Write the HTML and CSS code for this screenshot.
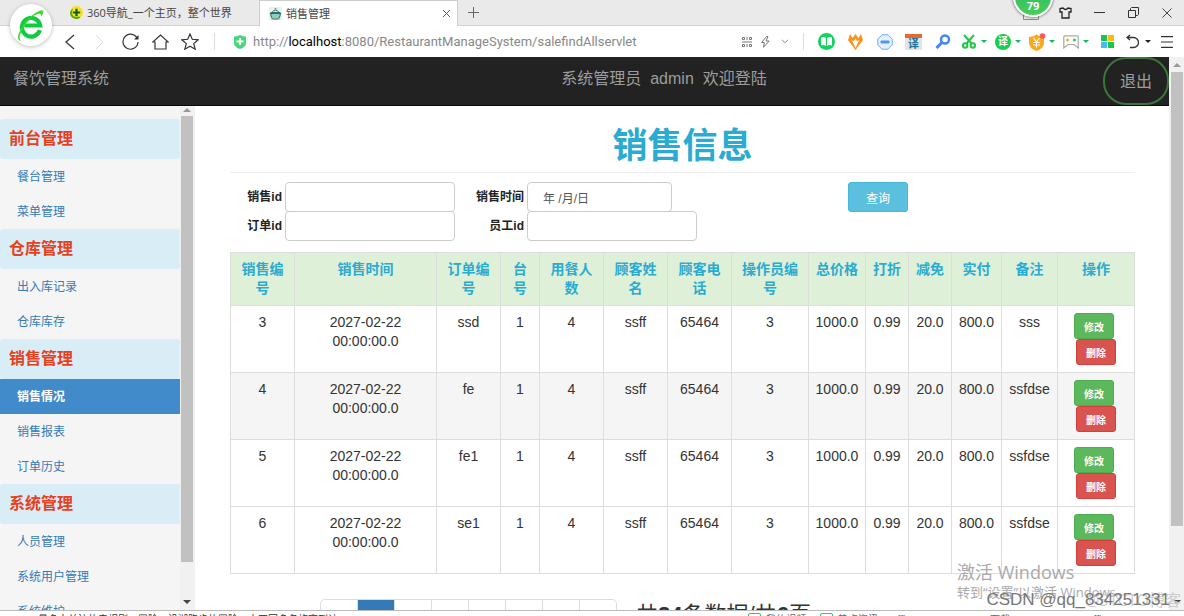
FILE: index.html
```html
<!DOCTYPE html>
<html lang="zh-CN">
<head>
<meta charset="utf-8">
<title>销售管理</title>
<link rel="stylesheet" href="styles.css">
</head>
<body>
<header class="browser">
  <div class="tabbar">
    <div class="tab">
      <svg class="favicon" viewBox="0 0 14 14"><circle cx="7" cy="7" r="7" fill="#f8df1e"/><path d="M0 7a7 7 0 0 0 11 5.700L3 3Q1 4 0 7z" fill="#4aa626"/><circle cx="7" cy="7" r="5" fill="#f5e52b"/><path d="M7 3v8M3 7h8" stroke="#135c25" stroke-width="2.400"/></svg>
      <span>360导航_一个主页，整个世界</span>
    </div>
    <div class="tab tab-active">
      <svg class="favicon" viewBox="0 0 14 14"><rect width="14" height="14" fill="#d9f8f5"/><path d="M2 6h10v3q0 3-3 4H5q-3-1-3-4z" fill="#7fd3ce" stroke="#28545a"/><path d="M3 6q4-5 8 0M6 2h2M1 7h12" fill="none" stroke="#4c5740"/><path d="M2 13h10" stroke="#d19c43"/></svg>
      <span>销售管理</span>
      <button class="plain tab-close" aria-label="关闭标签"><svg width="9" height="9" viewBox="0 0 9 9"><path d="M1 1l7 7M8 1l-7 7" stroke="#555"/></svg></button>
    </div>
    <button class="plain tab-new" aria-label="新标签"><svg width="11" height="11" viewBox="0 0 11 11"><path d="M5.500 0v11M0 5.500h11" stroke="#666"/></svg></button>
    <div class="window-controls">
      <button class="plain" aria-label="面板"><svg width="16" height="14" viewBox="0 0 16 14"><path d="M.5 1.500h15v12H.5zM5 10.500h6" fill="none" stroke="#888"/></svg></button>
      <button class="plain" aria-label="皮肤"><svg width="13" height="12" viewBox="0 0 13 12"><path d="M4 1L1 1.500v3.500h2v6h7V5h2V1.500L9 1Q6.500 4 4 1z" fill="none" stroke="#222" stroke-width="1.300"/></svg></button>
      <button class="plain" aria-label="最小化"><svg width="11" height="11" viewBox="0 0 11 11"><path d="M0 5.500h11" stroke="#333"/></svg></button>
      <button class="plain" aria-label="还原"><svg width="11" height="11" viewBox="0 0 11 11"><path d="M.5 3.500h7v7h-7zM2.500 3V1.500l1-1h7v7l-1 1H8" fill="none" stroke="#333"/></svg></button>
      <button class="plain" aria-label="关闭"><svg width="10" height="10" viewBox="0 0 10 10"><path d="M.5.5l9 9M9.500.5l-9 9" stroke="#444"/></svg></button>
    </div>
  </div>
  <div class="toolbar">
    <button class="plain nav" aria-label="后退"><svg width="10" height="16" viewBox="0 0 10 16"><path d="M9 1L1 8l8 7" fill="none" stroke="#333" stroke-width="1.200"/></svg></button>
    <button class="plain nav" aria-label="前进"><svg width="10" height="16" viewBox="0 0 10 16"><path d="M1 1l7 7-7 7" fill="none" stroke="#ddd"/></svg></button>
    <button class="plain nav" aria-label="刷新"><svg width="17" height="17" viewBox="0 0 17 17"><path d="M15.500 6A7.500 7.500 0 1 0 16 9" fill="none" stroke="#333" stroke-width="1.200"/><path d="M16.500 2v4.500H12z" fill="#333"/></svg></button>
    <button class="plain nav" aria-label="主页"><svg width="17" height="16" viewBox="0 0 17 16"><path d="M3 8H.8L8.500 1l7.700 7H14v7H3z" fill="none" stroke="#333" stroke-width="1.200"/></svg></button>
    <button class="plain nav" aria-label="收藏"><svg width="18" height="17" viewBox="0 0 18 17"><path d="M9 1l2.300 5.300 5.900.5-4.500 3.800 1.500 5.600L9 13.200l-5.200 3 1.500-5.600L.8 6.800l5.900-.5z" fill="none" stroke="#333" stroke-width="1.200"/></svg></button>
    <span class="divider"></span>
    <div class="address">
      <svg width="12" height="14" viewBox="0 0 12 14"><path d="M0 1.500Q3 1.500 6 0q3 1.500 6 1.500V8q0 4-6 6-6-2-6-6z" fill="#46d67c"/><path d="M6 3v7M2.500 6.500h7" stroke="#fff" stroke-width="1.800"/></svg>
      <span class="url">http://<b>localhost</b>:8080/RestaurantManageSystem/salefindAllservlet</span>
    </div>
    <button class="plain mini" aria-label="二维码"><svg width="10" height="10" viewBox="0 0 10 10" fill="none" stroke="#777"><path d="M.5.5h2v2h-2zM7.500.5h2v2h-2zM.5 7.500h2v2h-2zM7.500 7.500h2v2h-2zM5 0v3M5 7v3M0 5h10"/></svg></button>
    <button class="plain mini" aria-label="极速模式"><svg width="9" height="12" viewBox="0 0 9 12"><path d="M5.500.5L.7 6.500h2.600L2.500 11.300 8.200 5H5l2-4.500z" fill="none" stroke="#777"/></svg></button>
    <button class="plain mini" aria-label="更多"><svg width="8" height="5" viewBox="0 0 8 5"><path d="M1 .8l3 3 3-3" fill="none" stroke="#888"/></svg></button>
    <span class="divider"></span>
    <button class="plain ext" aria-label="阅读"><svg width="17" height="17" viewBox="0 0 17 17"><circle cx="8.500" cy="8.500" r="8.500" fill="#10d45e"/><path d="M3 4.500q3-1 5 .5v8q-2-1.500-5-.5zM14 4.500q-3-1-5 .5v8q2-1.500 5-.5z" fill="#fff"/></svg></button>
    <button class="plain ext" aria-label="助手"><svg width="15" height="16" viewBox="0 0 15 16"><path d="M2 0l2.500 4L7.500 0l3 4L13 0l2 6-7.500 10L0 6z" fill="#f7951e"/><path d="M4 6.500L7.500 14 11 6.500l-2 .5-1.500-2.500L6 7z" fill="#fff"/></svg></button>
    <button class="plain ext" aria-label="拦截"><svg width="16" height="16" viewBox="0 0 16 16"><path d="M5 .8h6L15.200 5v6L11 15.200H5L.8 11V5z" fill="#e6f1ff" stroke="#6aaaf8"/><rect x="3.500" y="6.500" width="9" height="3" rx="1" fill="#4a98f5"/></svg></button>
    <button class="plain ext" aria-label="网页翻译"><span class="trans-box">译</span></button>
    <button class="plain ext" aria-label="搜索"><svg width="16" height="15" viewBox="0 0 16 15"><circle cx="10" cy="5.500" r="4" fill="none" stroke="#4285f4" stroke-width="2.400"/><path d="M7 8.500L1.500 14" stroke="#4285f4" stroke-width="3"/></svg></button>
    <button class="plain menu-btn" aria-label="截图"><span class="slot"><svg width="14" height="15" viewBox="0 0 14 15"><path d="M2 1l8 9M12 1l-8 9" stroke="#1fc845" stroke-width="2"/><g fill="none" stroke="#1fc845" stroke-width="2"><circle cx="3.200" cy="11.500" r="2.200"/><circle cx="10.800" cy="11.500" r="2.200"/></g></svg></span><i class="caret"></i></button>
    <button class="plain menu-btn" aria-label="翻译"><span class="slot"><span class="trans-dot">译</span></span><i class="caret"></i></button>
    <button class="plain menu-btn" aria-label="网银"><span class="slot"><svg width="18" height="18" viewBox="0 0 18 18"><path d="M1 4q4 0 7.500-2.500Q12 4 16 4v6q0 5-7.500 8Q1 15 1 10z" fill="#fba81c"/><path d="M5.500 5l3 4 3-4M5 9.500h7M5 12h7M8.500 9v5.500" fill="none" stroke="#fff" stroke-width="1.200"/><circle cx="14.500" cy="3" r="2.800" fill="#f75c5c"/></svg></span><i class="caret"></i></button>
    <button class="plain menu-btn" aria-label="游戏"><span class="slot"><svg width="16" height="14" viewBox="0 0 16 14"><path d="M2 .8h12q1.200 0 1.200 1.200v11L11 9.500H5L.8 13V2Q.8.800 2 .8z" fill="none" stroke="#aaa" stroke-width="1.200"/><circle cx="4.500" cy="5" r="1.500" fill="#f7a823"/><circle cx="11.500" cy="5" r="1.500" fill="#2cc94c"/></svg></span><i class="caret"></i></button>
    <button class="plain apps" aria-label="应用"><svg width="13" height="13" viewBox="0 0 13 13"><path d="M0 0h6v6H0z" fill="#17c94a"/><path d="M7 0h6v6H7z" fill="#fdb913"/><path d="M0 7h6v6H0z" fill="#45bdf3"/><path d="M7 7h6v6H7z" fill="#17c94a"/></svg></button>
    <button class="plain menu-btn" aria-label="撤销"><span class="slot"><svg width="14" height="15" viewBox="0 0 14 15"><path d="M4 1L1 3.500 4 6M1 3.500h6.500a5 5 0 0 1 0 10H4" fill="none" stroke="#333" stroke-width="1.300"/></svg></span><i class="caret caret-dark"></i></button>
    <button class="plain main-menu" aria-label="菜单"><svg width="12" height="12" viewBox="0 0 12 12"><path d="M0 .7h12M0 6h12M0 11.300h12" stroke="#333" stroke-width="1.200"/></svg></button>
  </div>
  <div class="logo"><svg width="28" height="33" viewBox="0 0 30 35"><path d="M24.500 22.500A9.800 10 0 1 1 24.800 17.500H8" fill="none" stroke="#10cb43" stroke-width="4.500"/><path d="M4 34C-2 33 2 23 9 14 17 5 26-1 28 2q1 2-2 6 0-4-3-3-6 1-12 9C4 23 1 31 4 34z" fill="#3ddd28"/></svg></div>
  <div class="speed">79</div>
</header>

<div class="viewport">
  <div class="page">
    <nav class="navbar">
      <a class="brand" href="#">餐饮管理系统</a>
      <p class="welcome">系统管理员&nbsp; admin&nbsp; 欢迎登陆</p>
      <a class="logout" href="#">退出</a>
    </nav>
    <div class="columns">
      <aside class="side">
        <div class="side-menu">
          <h2>前台管理</h2>
          <a href="#">餐台管理</a>
          <a href="#">菜单管理</a>
          <h2>仓库管理</h2>
          <a href="#">出入库记录</a>
          <a href="#">仓库库存</a>
          <h2>销售管理</h2>
          <a class="active" href="#">销售情况</a>
          <a href="#">销售报表</a>
          <a href="#">订单历史</a>
          <h2>系统管理</h2>
          <a href="#">人员管理</a>
          <a href="#">系统用户管理</a>
          <a href="#">系统维护</a>
        </div>
        <div class="scroll side-scroll"><i class="up"></i><span class="thumb"></span><i class="down"></i></div>
      </aside>
      <main class="main">
        <h1>销售信息</h1>
        <form class="search">
          <label for="sale-id">销售id</label><input id="sale-id" type="text">
          <label for="sale-time">销售时间</label><input id="sale-time" class="date" type="text" value="年 /月/日">
          <button class="query" type="button">查询</button>
          <label for="order-id">订单id</label><input id="order-id" type="text">
          <label for="staff-id">员工id</label><input id="staff-id" type="text">
        </form>
        <table>
          <colgroup><col class="w64"><col class="w142"><col class="w64"><col class="w39"><col class="w64"><col class="w64"><col class="w64"><col class="w77"><col class="w57"><col class="w43"><col class="w43"><col class="w50"><col class="w56"><col class="w77"></colgroup>
          <thead>
            <tr><th>销售编号</th><th>销售时间</th><th>订单编号</th><th>台号</th><th>用餐人数</th><th>顾客姓名</th><th>顾客电话</th><th>操作员编号</th><th>总价格</th><th>打折</th><th>减免</th><th>实付</th><th>备注</th><th>操作</th></tr>
          </thead>
          <tbody>
            <tr><td>3</td><td>2027-02-22 00:00:00.0</td><td>ssd</td><td>1</td><td>4</td><td>ssff</td><td>65464</td><td>3</td><td>1000.0</td><td>0.99</td><td>20.0</td><td>800.0</td><td>sss</td><td><div class="actions"><button class="edit">修改</button><button class="delete">删除</button></div></td></tr>
            <tr class="hover"><td>4</td><td>2027-02-22 00:00:00.0</td><td>fe</td><td>1</td><td>4</td><td>ssff</td><td>65464</td><td>3</td><td>1000.0</td><td>0.99</td><td>20.0</td><td>800.0</td><td>ssfdse</td><td><div class="actions"><button class="edit">修改</button><button class="delete">删除</button></div></td></tr>
            <tr><td>5</td><td>2027-02-22 00:00:00.0</td><td>fe1</td><td>1</td><td>4</td><td>ssff</td><td>65464</td><td>3</td><td>1000.0</td><td>0.99</td><td>20.0</td><td>800.0</td><td>ssfdse</td><td><div class="actions"><button class="edit">修改</button><button class="delete">删除</button></div></td></tr>
            <tr><td>6</td><td>2027-02-22 00:00:00.0</td><td>se1</td><td>1</td><td>4</td><td>ssff</td><td>65464</td><td>3</td><td>1000.0</td><td>0.99</td><td>20.0</td><td>800.0</td><td>ssfdse</td><td><div class="actions"><button class="edit">修改</button><button class="delete">删除</button></div></td></tr>
          </tbody>
        </table>
        <div class="pager">
          <ul>
            <li><a href="#">«</a></li><li><a class="current" href="#">1</a></li><li><a href="#">2</a></li><li><a href="#">3</a></li><li><a href="#">4</a></li><li><a href="#">5</a></li><li><a href="#">6</a></li><li><a href="#">»</a></li>
          </ul>
          <p>共<b>24</b>条数据/共<b>6</b>页</p>
        </div>
      </main>
    </div>
  </div>
  <div class="scroll page-scroll"><i class="up"></i><span class="thumb"></span><i class="down"></i></div>
</div>

<footer class="status">
  <span class="news">最多人关注的电视剧，冒险，沿湖跑步的冒险，土四国多名旅客到访</span>
  <span class="status-item"><i class="badge"></i>我的视频</span>
  <span class="status-item"><i class="badge"></i>热点资讯</span>
  <span class="status-item status-wide">office</span>
  <span class="status-item status-wide">下载</span>
  <span class="status-item status-wide">office</span>
</footer>

<div class="activate"><p class="activate-title">激活 Windows</p><p class="activate-text">转到“设置”以激活 Windows。</p></div>
<div class="mark mark-back">@51CTO博客</div>
<div class="mark mark-front">CSDN @qq_834251331</div>
</body>
</html>
```
FILE: styles.css
```css
* { box-sizing: border-box; }
html, body { height: 100%; }
body {
  margin: 0;
  display: flex;
  flex-direction: column;
  position: relative;
  overflow: hidden;
  background: #fff;
  color: #333;
  font: 14px/19px "Liberation Sans", "Noto Sans CJK SC", sans-serif;
}
h1, h2, p, ul { margin: 0; padding: 0; }
a { text-decoration: none; }
svg { display: block; flex: none; }
button, input { font-family: inherit; }
.plain {
  display: flex;
  align-items: center;
  justify-content: center;
  flex: none;
  padding: 0;
  border: 0;
  background: none;
}

/* browser chrome */
.browser { position: relative; flex: none; font-family: "Open Sans", "Noto Sans CJK SC", sans-serif; }
.tabbar {
  display: flex;
  height: 26px;
  padding-left: 60px;
  background: #eaeaea;
  border-bottom: 1px solid #d2d2d2;
}
.tab {
  display: flex;
  align-items: center;
  gap: 4px;
  width: 199px;
  padding: 0 6px 0 10px;
  font-size: 11px;
  color: #444;
  white-space: nowrap;
}
.tab-active {
  height: 26px;
  padding-left: 9px;
  background: #fff;
  border: 1px solid #ccc;
  border-bottom: 0;
}
.favicon { width: 13px; height: 13px; }
.tab-close { margin-left: auto; }
.tab-new { width: 30px; }
.window-controls { display: flex; margin-left: auto; }
.window-controls .plain { width: 34px; }
.toolbar {
  display: flex;
  align-items: center;
  height: 31px;
  padding: 0 5px 0 55px;
  background: #fff;
}
.nav { width: 30px; height: 30px; }
.divider { width: 18px; height: 17px; flex: none; }
.divider::before {
  content: "";
  display: block;
  width: 1px;
  height: 17px;
  margin: 0 auto;
  background: #ddd;
}
.address { display: flex; align-items: center; gap: 7px; flex: 1; min-width: 0; padding-left: 11px; }
.url { font-family: Roboto, sans-serif; font-size: 13px; color: #888; white-space: nowrap; }
.url b { font-weight: 400; color: #000; }
.mini { width: 19px; }
.ext { width: 29px; }
.trans-box {
  width: 17px;
  height: 16px;
  border-top: 4px solid #e66a2c;
  background: #e4e4e4;
  color: #24759b;
  font-size: 11px;
  line-height: 11px;
  font-weight: 700;
}
.trans-dot {
  width: 16px;
  height: 16px;
  border-radius: 50%;
  background: #14ce4d;
  color: #fff;
  font-size: 10px;
  line-height: 15px;
  font-weight: 700;
}
.menu-btn { width: 34px; justify-content: flex-start; gap: 2px; padding-left: 2px; }
.slot { display: flex; width: 20px; justify-content: center; }
.caret { border: 3px solid transparent; border-top-color: #13b95c; border-bottom: 0; }
.caret-dark { border-top-color: #222; }
.apps { width: 28px; }
.main-menu { width: 24px; }
.logo {
  position: absolute;
  left: 10px;
  top: 4px;
  display: flex;
  align-items: center;
  justify-content: center;
  width: 42px;
  height: 42px;
  border-radius: 50%;
  background: #fff;
  box-shadow: 0 1px 4px rgba(0, 0, 0, .25);
}
.speed {
  position: absolute;
  right: 131px;
  top: -23px;
  width: 40px;
  height: 40px;
  border: 2px solid #fff;
  border-radius: 50%;
  background: linear-gradient(#2bb568, #46cf57);
  box-shadow: 0 0 3px rgba(0, 0, 0, .8);
  color: #fff;
  font-size: 11px;
  font-weight: 700;
  line-height: 54px;
  text-align: center;
}

/* page area */
.viewport { display: flex; flex: 1; min-height: 0; }
.page { display: flex; flex-direction: column; flex: 1; min-width: 0; }
.navbar {
  display: grid;
  grid-template-columns: 1fr auto 1fr;
  align-items: start;
  flex: none;
  height: 49px;
  padding-left: 13px;
  background: #222;
  border-bottom: 1px solid #080808;
  font-size: 16px;
}
.navbar p, .navbar a { color: #9d9d9d; }
.brand, .welcome { line-height: 43px; }
.welcome { padding-left: 146px; }
.logout {
  justify-self: end;
  width: 66px;
  height: 48px;
  border: 2px solid #3c763d;
  border-radius: 23px;
  line-height: 45px;
  text-align: center;
}
.columns { display: flex; flex: 1; min-height: 0; }
.side { display: flex; flex: none; width: 195px; background: #f5f5f5; }
.side-menu { width: 180px; padding-top: 13px; overflow: hidden; }
.side h2 {
  height: 40px;
  padding-left: 9px;
  border-radius: 3px;
  background: #d9edf7;
  color: #e8401c;
  font-size: 16px;
  line-height: 39px;
}
.side a {
  display: block;
  height: 35px;
  padding-left: 17px;
  color: #337ab7;
  font-size: 12px;
  line-height: 37px;
}
.side a.active { background: #428bca; color: #fff; font-weight: 700; }
.scroll {
  display: flex;
  flex-direction: column;
  align-items: center;
  flex: none;
  width: 15px;
  background: #f1f1f1;
}
.thumb { width: 12px; background: #c1c1c1; }
.up, .down { border: 4px solid transparent; }
.up { border-top: 0; border-bottom-color: #999; }
.down { border-bottom: 0; border-top-color: #444; margin-top: auto; }
.side-scroll { padding: 2px 1px 6px 0; }
.side-scroll .thumb { height: 90%; margin-top: 4px; }
.page-scroll { padding: 6px 0 6px; }
.page-scroll .thumb { height: 84%; margin-top: 5px; }

.main { flex: 1; min-width: 0; overflow: hidden; padding: 13px 34px 0 35px; }
h1 {
  height: 54px;
  border-bottom: 1px solid #eee;
  color: #2aabd2;
  font-size: 35px;
  line-height: 54px;
  text-align: center;
}
.search {
  display: grid;
  grid-template-columns: 52px 170px 66px 318px auto;
  grid-auto-rows: 29px;
  column-gap: 3px;
  justify-content: start;
  align-items: start;
  margin: 9px 0 12px;
}
.search label { color: #222; font-size: 12px; font-weight: 700; line-height: 30px; text-align: right; white-space: nowrap; }
.search input {
  width: 170px;
  height: 30px;
  padding: 0 15px;
  border: 1px solid #ccc;
  border-radius: 4px;
  color: #555;
  font-size: 12px;
}
.search .date { width: 145px; }
.query {
  width: 60px;
  height: 30px;
  padding: 0;
  border: 1px solid #46b8da;
  border-radius: 3px;
  background: #5bc0de;
  color: #fff;
  font-size: 12px;
}
.search #order-id { grid-column: 2; }
.search label[for="order-id"] { grid-column: 1; }

table { width: 100%; table-layout: fixed; border-collapse: collapse; }
th, td { padding: 7px; border: 1px solid #ddd; text-align: center; vertical-align: top; }
th { background: #dff0d8; color: #2aabd2; }
.hover { background: #f5f5f5; }
td:nth-child(n+9), th:nth-child(n+9) { padding-left: 0; padding-right: 0; }
.w39 { width: 39px; }
.w43 { width: 43px; }
.w50 { width: 50px; }
.w56 { width: 56px; }
.w57 { width: 57px; }
.w64 { width: 64px; }
.w77 { width: 77px; }
.w142 { width: 142px; }
.actions { display: flex; flex-direction: column; width: 44px; margin: 0 auto; padding-right: 2px; }
.actions button {
  width: 40px;
  height: 26px;
  padding: 0;
  border: 1px solid #4cae4c;
  border-radius: 3px;
  background: #5cb85c;
  color: #fff;
  font-size: 10px;
  font-weight: 700;
}
.actions .delete { align-self: flex-end; border-color: #d43f3a; background: #d9534f; }
.pager { display: flex; align-items: flex-start; gap: 19px; padding: 25px 0 0 90px; }
.pager ul { display: flex; list-style: none; border: 1px solid #ddd; border-radius: 5px; overflow: hidden; }
.pager li + li { border-left: 1px solid #ddd; }
.pager a { display: block; width: 36px; line-height: 36px; color: #337ab7; text-align: center; }
.pager .current { background: #337ab7; color: #fff; }
.pager p { font-size: 22px; line-height: 32px; white-space: nowrap; }

.status {
  display: flex;
  gap: 14px;
  flex: none;
  height: 6px;
  padding: 2px 12px 0 38px;
  overflow: hidden;
  position: relative;
  background: #fff;
  border-top: 1px solid #bbb;
  font-size: 10px;
  line-height: 14px;
  white-space: nowrap;
}
.news { margin-right: auto; }
.status-item { display: flex; gap: 5px; flex: none; color: #666; }
.status-wide { width: 84px; }
.badge { width: 13px; height: 12px; border: 1px solid #2fc56d; border-radius: 2px; }

/* overlays */
.activate, .mark { position: absolute; white-space: nowrap; font-family: "Open Sans", "Noto Sans CJK SC", sans-serif; }
.activate { right: 64px; bottom: 15px; color: #aaa; width: 163px; }
.activate-title { font-size: 18px; line-height: 22px; }
.activate-text { font-size: 13px; line-height: 18px; }
.mark-back { right: 3px; bottom: 6px; color: #ccc; font-size: 16px; }
.mark-front { right: 14px; bottom: 7px; color: #777; font-size: 17px; font-family: "Liberation Sans", sans-serif; }
```
